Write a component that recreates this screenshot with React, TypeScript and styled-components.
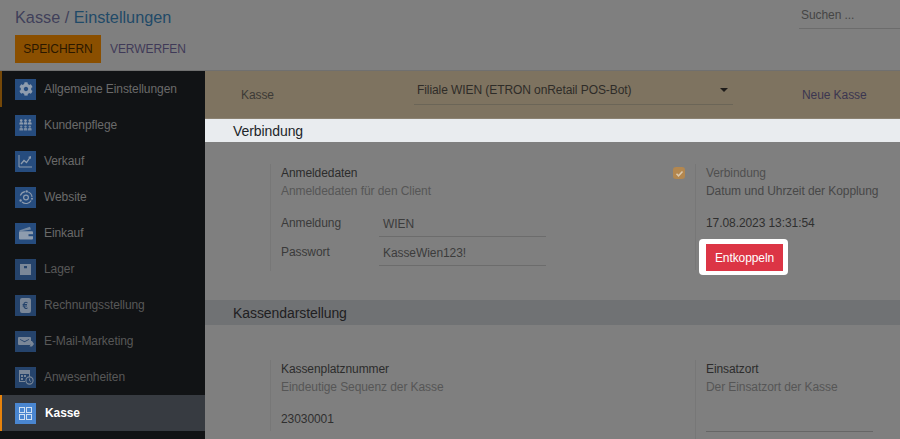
import React from "react";
import styled, { createGlobalStyle } from "styled-components";
import { FaCog } from "react-icons/fa";

const Global = createGlobalStyle`
  html, body { margin: 0; padding: 0; height: 100%; overflow: hidden; background: #7f7f7f; }
  #root { height: 100%; }
  * { box-sizing: border-box; }
`;

const Page = styled.div`
  width: 900px;
  height: 439px;
  overflow: hidden;
  font-family: "Liberation Sans", Arial, sans-serif;
  font-size: 12px;
  letter-spacing: -0.08px;
  color: #3a3a3a;
  background: #7f7f7f;
  display: flex;
  flex-direction: column;
`;

const TopBar = styled.header`
  height: 71px;
  flex: none;
  padding: 8px 0 0 15px;
  border-bottom: 1px solid #707070;
  display: flex;
  justify-content: space-between;
`;

const Breadcrumb = styled.div`
  font-size: 16.25px;
  line-height: 18px;
  letter-spacing: 0;
  color: #3f3f5a;
  span { color: #1f4a68; }
`;

const Actions = styled.div`
  display: flex;
  align-items: center;
  gap: 9px;
  margin-top: 9px;
`;

const SaveButton = styled.div`
  width: 86px;
  height: 28px;
  background: #8a4f00;
  color: #2a1800;
  display: flex;
  align-items: center;
  justify-content: center;
`;

const DiscardButton = styled.div`
  color: #3f3a58;
`;

const Search = styled.div`
  width: 101px;
  height: 21px;
  padding: 1px 0 0 2px;
  line-height: 13px;
  color: #454545;
  border-bottom: 1px solid #6c6c6c;
`;

const Body = styled.div`
  flex: 1;
  display: flex;
  min-height: 0;
`;

const Sidebar = styled.nav`
  width: 205px;
  flex: none;
  background: #111315;
`;

const NavRow = styled.div<{ $active?: boolean; $dim?: boolean; $marked?: boolean }>`
  height: 36px;
  display: flex;
  align-items: center;
  gap: ${(p) => (p.$active ? "9px" : "8px")};
  padding-left: ${(p) => (p.$active || p.$marked ? "13px" : "15px")};
  color: ${(p) => (p.$active ? "#ffffff" : p.$dim ? "#585858" : "#6a6a6a")};
  background: ${(p) => (p.$active ? "#373b41" : "transparent")};
  font-weight: ${(p) => (p.$active ? 700 : 400)};
  border-left: ${(p) =>
    p.$active ? "2px solid #e8830c" : p.$marked ? "2px solid #754808" : "none"};
`;

const NavIcon = styled.span<{ $active?: boolean; $dim?: boolean }>`
  width: 21px;
  height: 21px;
  flex: none;
  display: flex;
  align-items: center;
  justify-content: center;
  background: ${(p) => (p.$active ? "#4a86d0" : p.$dim ? "#25436b" : "#264c7e")};
  color: ${(p) => (p.$active ? "#cfe0f3" : p.$dim ? "#7a8798" : "#8e9cae")};
`;

const Main = styled.main`
  flex: 1;
  min-width: 0;
  display: flex;
  flex-direction: column;
`;

const KasseBar = styled.div`
  height: 48px;
  flex: none;
  background: #7e7360;
  border-bottom: 1px solid #8b8272;
  display: flex;
  align-items: center;
  padding-left: 36px;
  color: #3c3a36;
`;

const KasseLabel = styled.div`
  width: 173px;
  margin-top: 1px;
`;

const KasseSelect = styled.div`
  width: 319px;
  height: 24px;
  margin-top: -3px;
  padding: 2px 0 0 3px;
  border-bottom: 1px solid #6b6557;
  color: #2e2c28;
  position: relative;
`;

const Caret = styled.span`
  position: absolute;
  right: 5px;
  top: 7px;
  border-left: 4px solid transparent;
  border-right: 4px solid transparent;
  border-top: 4px solid #1e1c1a;
`;

const NewKasse = styled.div`
  margin-left: 69px;
  margin-top: 1px;
  color: #3b3650;
`;

const SectionTitle = styled.div<{ $bright?: boolean }>`
  height: ${(p) => (p.$bright ? "23px" : "25px")};
  flex: none;
  padding-left: 28px;
  display: flex;
  align-items: center;
  font-size: 14px;
  background: ${(p) => (p.$bright ? "#e9ecef" : "#707274")};
  color: ${(p) => (p.$bright ? "#212529" : "#1f2022")};
`;

const FieldGrid = styled.div<{ $gap: number }>`
  flex: none;
  display: grid;
  grid-template-columns: 425px 200px;
  align-items: start;
  padding-left: 65px;
  padding-top: ${(p) => p.$gap}px;
`;

const FieldBlock = styled.div`
  border-left: 1px solid #777;
  padding-left: 10px;
  position: relative;
`;

const Title = styled.div<{ $dark?: boolean }>`
  line-height: 18px;
  color: ${(p) => (p.$dark ? "#2c2c2c" : "#4f4f4f")};
`;

const Sub = styled.div<{ $dark?: boolean }>`
  line-height: 18px;
  color: ${(p) => (p.$dark ? "#474747" : "#565656")};
`;

const Spacer = styled.div<{ $h: number }>`
  flex: none;
  height: ${(p) => p.$h}px;
`;

const Row = styled.div`
  display: flex;
  align-items: flex-start;
  height: 29px;
`;

const RowLabel = styled.div`
  width: 98px;
  padding-top: 3px;
  color: #3a3a3a;
`;

const RowValue = styled.div`
  width: 167px;
  height: 24px;
  padding: 4px 0 0 4px;
  color: #3c3c3c;
  border-bottom: 1px solid #6c6c6c;
`;

const Value = styled.div`
  margin-top: 16px;
  color: #2f2f2f;
`;

const ClosingValue = styled(Value)`
  padding-bottom: 5px;
`;

const EmptyLine = styled.div`
  width: 167px;
  height: 1px;
  margin: 35px 0 10px;
  background: #666;
`;

const CheckBox = styled.span`
  position: absolute;
  left: -23px;
  top: 3px;
  width: 12px;
  height: 12px;
  border-radius: 3px;
  background: #b3874f;
  display: flex;
  align-items: center;
  justify-content: center;
`;

const Halo = styled.div`
  width: 89px;
  height: 36px;
  margin: 9px 0 -5px -7px;
  padding: 5px 5px 4px 7px;
  background: #fff;
  border-radius: 4px;
`;

const DangerButton = styled.div`
  height: 100%;
  background: #dc3545;
  color: #fff;
  display: flex;
  align-items: center;
  justify-content: center;
`;

const Glyph = styled.svg`
  display: block;
  fill: currentColor;
`;

const UsersIcon = () => (
  <Glyph width="13" height="12" viewBox="0 0 13 12">
    <g>
      <circle cx="2.2" cy="1.6" r="1.3" />
      <circle cx="6.5" cy="1.6" r="1.3" />
      <circle cx="10.8" cy="1.6" r="1.3" />
      <path d="M0.4 5.4V4.2q0-1 1-1h1.6q1 0 1 1v1.2zM4.7 5.4V4.2q0-1 1-1h1.6q1 0 1 1v1.2zM9 5.4V4.2q0-1 1-1h1.6q1 0 1 1v1.2z" />
      <circle cx="2.2" cy="7.6" r="1.2" opacity="0.8" />
      <circle cx="6.5" cy="7.6" r="1.2" opacity="0.8" />
      <circle cx="10.8" cy="7.6" r="1.2" opacity="0.8" />
      <path
        d="M0.4 11.4V10q0-1 1-1h1.6q1 0 1 1v1.4zM4.7 11.4V10q0-1 1-1h1.6q1 0 1 1v1.4zM9 11.4V10q0-1 1-1h1.6q1 0 1 1v1.4z"
        opacity="0.8"
      />
    </g>
  </Glyph>
);

const SalesIcon = () => (
  <Glyph width="15" height="14" viewBox="0 0 15 14">
    <path d="M1 1v12h13" fill="none" stroke="currentColor" strokeWidth="1" />
    <path d="M3 10l3-3.5 2.5 2L12 3.5" fill="none" stroke="currentColor" strokeWidth="1.3" />
    <path d="M10 3l3-1v3z" />
  </Glyph>
);

const WebsiteIcon = () => (
  <Glyph width="16" height="16" viewBox="0 0 16 16">
    <circle cx="8" cy="8.5" r="2.4" fill="none" stroke="currentColor" strokeWidth="1.2" />
    <path
      d="M2.3 6.5A6 6 0 0 1 7 2.6M10.3 2.9A6 6 0 0 1 14 8M13.2 11.5A6 6 0 0 1 4 13"
      fill="none"
      stroke="currentColor"
      strokeWidth="1.1"
    />
    <circle cx="8.7" cy="2.4" r="1.2" />
    <circle cx="2.6" cy="11.5" r="1.2" />
    <circle cx="14" cy="9.8" r="1" />
  </Glyph>
);

const WalletIcon = () => (
  <Glyph width="16" height="14" viewBox="0 0 16 14">
    <path d="M1 4.5L12 .8l1 2.6L3 5.2z" opacity="0.75" />
    <rect x="1" y="5.2" width="14" height="8.3" rx="1" />
    <rect x="10.5" y="8.2" width="4.5" height="2" fill="#264c7e" />
  </Glyph>
);

const BoxIcon = () => (
  <Glyph width="11" height="11" viewBox="0 0 11 11">
    <path fillRule="evenodd" d="M0 0h11v11H0zM4 2v2.2h3V2z" />
  </Glyph>
);

const InvoiceIcon = () => (
  <Glyph width="11" height="15" viewBox="0 0 11 15">
    <path
      fillRule="evenodd"
      d="M2 0h7a2 2 0 0 1 2 2v11a2 2 0 0 1-2 2H2a2 2 0 0 1-2-2V2a2 2 0 0 1 2-2zm5.5 4.2A2.6 2.6 0 0 0 3.4 6H2.6v1h.7v.6h-.7v1h.8a2.6 2.6 0 0 0 4.1 1.8v-1.2a1.7 1.7 0 0 1-3-.6H7v-1H4.3V7H7V6H4.5a1.7 1.7 0 0 1 3-.6z"
    />
  </Glyph>
);

const MailIcon = () => (
  <Glyph width="17" height="12" viewBox="0 0 17 12">
    <path
      fillRule="evenodd"
      d="M2 2h11a1 1 0 0 1 1 1v6a1 1 0 0 1-1 1H2a1 1 0 0 1-1-1V3a1 1 0 0 1 1-1zm1 2v.8l4.5 2.4L12 4.8V4L7.5 6.2z"
    />
    <path d="M15 6l2 3-2 2.5h-2.5l1.5-2.5-1-3z" />
  </Glyph>
);

const CalendarClockIcon = () => (
  <Glyph width="16" height="16" viewBox="0 0 16 16">
    <path
      fillRule="evenodd"
      d="M1 1h11v7h-1V5H2v7h5v1H1zM3 6h2v2H3zm3 0h2v2H6zM3 9h2v2H3z"
    />
    <circle cx="11.5" cy="11.5" r="3.6" fill="none" stroke="currentColor" strokeWidth="1.1" />
    <path d="M11.5 9.5v2.2l1.5.8" fill="none" stroke="currentColor" strokeWidth="1" />
  </Glyph>
);

const GridIcon = () => (
  <Glyph width="13" height="13" viewBox="0 0 13 13">
    <g fill="none" stroke="currentColor" strokeWidth="1">
      <rect x="0.5" y="0.5" width="5" height="5" />
      <rect x="7.5" y="0.5" width="5" height="5" />
      <rect x="0.5" y="7.5" width="5" height="5" />
      <rect x="7.5" y="7.5" width="5" height="5" />
    </g>
  </Glyph>
);

const CheckGlyph = () => (
  <svg width="9" height="9" viewBox="0 0 9 9">
    <path d="M1.5 4.8l2 2 4-4.4" fill="none" stroke="#dcc9ad" strokeWidth="1.5" />
  </svg>
);

const navItems = [
  { label: "Allgemeine Einstellungen", icon: <FaCog size={14} />, marked: true },
  { label: "Kundenpflege", icon: <UsersIcon /> },
  { label: "Verkauf", icon: <SalesIcon /> },
  { label: "Website", icon: <WebsiteIcon /> },
  { label: "Einkauf", icon: <WalletIcon /> },
  { label: "Lager", icon: <BoxIcon />, dim: true },
  { label: "Rechnungsstellung", icon: <InvoiceIcon />, dim: true },
  { label: "E-Mail-Marketing", icon: <MailIcon />, dim: true },
  { label: "Anwesenheiten", icon: <CalendarClockIcon />, dim: true },
  { label: "Kasse", icon: <GridIcon />, active: true },
];

export default function App() {
  return (
    <Page>
      <Global />
      <TopBar>
        <div>
          <Breadcrumb>
            Kasse / <span>Einstellungen</span>
          </Breadcrumb>
          <Actions>
            <SaveButton>SPEICHERN</SaveButton>
            <DiscardButton>VERWERFEN</DiscardButton>
          </Actions>
        </div>
        <Search>Suchen ...</Search>
      </TopBar>
      <Body>
        <Sidebar>
          {navItems.map((item) => (
            <NavRow key={item.label} $active={item.active} $dim={item.dim} $marked={item.marked}>
              <NavIcon $active={item.active} $dim={item.dim}>
                {item.icon}
              </NavIcon>
              {item.label}
            </NavRow>
          ))}
        </Sidebar>
        <Main>
          <KasseBar>
            <KasseLabel>Kasse</KasseLabel>
            <KasseSelect>
              Filiale WIEN (ETRON onRetail POS-Bot)
              <Caret />
            </KasseSelect>
            <NewKasse>Neue Kasse</NewKasse>
          </KasseBar>
          <SectionTitle $bright>Verbindung</SectionTitle>
          <FieldGrid $gap={22}>
            <FieldBlock>
              <Title $dark>Anmeldedaten</Title>
              <Sub>Anmeldedaten für den Client</Sub>
              <Spacer $h={13} />
              <Row>
                <RowLabel>Anmeldung</RowLabel>
                <RowValue>WIEN</RowValue>
              </Row>
              <Row>
                <RowLabel>Passwort</RowLabel>
                <RowValue>KasseWien123!</RowValue>
              </Row>
            </FieldBlock>
            <FieldBlock>
              <CheckBox>
                <CheckGlyph />
              </CheckBox>
              <Title>Verbindung</Title>
              <Sub $dark>Datum und Uhrzeit der Kopplung</Sub>
              <Value>17.08.2023 13:31:54</Value>
              <Halo>
                <DangerButton>Entkoppeln</DangerButton>
              </Halo>
            </FieldBlock>
          </FieldGrid>
          <Spacer $h={29} />
          <SectionTitle>Kassendarstellung</SectionTitle>
          <FieldGrid $gap={35}>
            <FieldBlock>
              <Title $dark>Kassenplatznummer</Title>
              <Sub>Eindeutige Sequenz der Kasse</Sub>
              <ClosingValue>23030001</ClosingValue>
            </FieldBlock>
            <FieldBlock>
              <Title $dark>Einsatzort</Title>
              <Sub>Der Einsatzort der Kasse</Sub>
              <EmptyLine />
            </FieldBlock>
          </FieldGrid>
        </Main>
      </Body>
    </Page>
  );
}
